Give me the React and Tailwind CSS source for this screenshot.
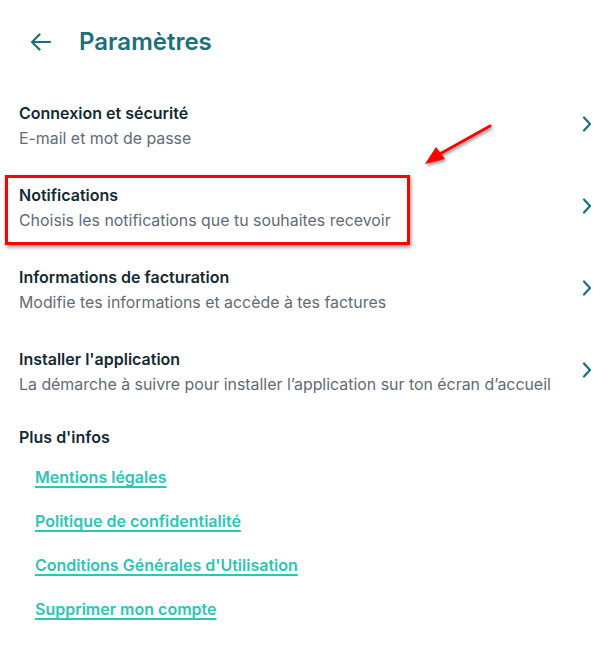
import React from "react"

const rows = [
  { title: "Connexion et sécurité", sub: "E-mail et mot de passe" },
  { title: "Notifications", sub: "Choisis les notifications que tu souhaites recevoir" },
  { title: "Informations de facturation", sub: "Modifie tes informations et accède à tes factures" },
  { title: "Installer l'application", sub: "La démarche à suivre pour installer l’application sur ton écran d’accueil" },
]

const links = [
  "Mentions légales",
  "Politique de confidentialité",
  "Conditions Générales d'Utilisation",
  "Supprimer mon compte",
]

function Chevron() {
  return (
    <svg width="10" height="16" viewBox="0 0 10 16" fill="none">
      <path d="M2 1.5 L8 8 L2 14.5" stroke="#1c6f7d" strokeWidth="2.2" strokeLinecap="round" strokeLinejoin="round" />
    </svg>
  )
}

export default function App() {
  return (
    <div className="relative min-h-[650px] w-[610px] bg-white font-['Inter','Noto_Sans',sans-serif] text-[#132a33]">
      {/* Header */}
      <div className="flex h-[85px] items-center pl-[30px]">
        <svg className="-mt-[2px]" width="21" height="18" viewBox="0 0 21 18" fill="none">
          <path d="M20 9 H2 M9.5 1.5 L2 9 L9.5 16.5" stroke="#1c6f7d" strokeWidth="2.2" strokeLinecap="round" strokeLinejoin="round" />
        </svg>
        <h1 className="-mt-[2px] ml-[28px] text-[24px] font-semibold leading-none text-[#1c6f7d]">Paramètres</h1>
      </div>

      {/* Settings rows */}
      <div className="flex flex-col">
        {rows.map((r) => (
          <div key={r.title} className="flex h-[82px] items-center justify-between pl-[19px] pr-[18px]">
            <div className="flex flex-col">
              <span className="text-[16px] font-semibold leading-[25px] text-[#132a33]">{r.title}</span>
              <span className="text-[15.9px] leading-[25px] text-[#5f6b78]">{r.sub}</span>
            </div>
            <div className="mt-[-4px]">
              <Chevron />
            </div>
          </div>
        ))}
      </div>

      {/* Plus d'infos */}
      <div className="mt-[12px] pl-[19px]">
        <div className="text-[16px] font-semibold leading-[25px] text-[#132a33]">Plus d'infos</div>
        <div className="mt-[15px] flex flex-col gap-[20px] pl-[16px]">
          {links.map((l) => (
            <a
              key={l}
              href="#"
              className="text-[16px] font-semibold leading-[24px] text-[#2ec4b6] underline decoration-[1.5px] underline-offset-[3px]"
            >
              {l}
            </a>
          ))}
        </div>
      </div>

      {/* Annotation: red highlight box */}
      <div className="pointer-events-none absolute left-[5px] top-[175px] h-[70px] w-[405px] border-[3px] border-[#ff0000] shadow-[1px_2px_4px_rgba(0,0,0,0.45)]" />

      {/* Annotation: red arrow */}
      <svg className="pointer-events-none absolute left-[418px] top-[118px]" width="80" height="56" viewBox="0 0 80 56" fill="none">
        <defs>
          <filter id="sh" x="-20%" y="-20%" width="150%" height="150%">
            <feDropShadow dx="1" dy="2" stdDeviation="1.5" floodColor="#000" floodOpacity="0.45" />
          </filter>
        </defs>
        <g filter="url(#sh)">
          <path d="M72 8 L20 37" stroke="#ff0000" strokeWidth="3" strokeLinecap="round" />
          <path d="M7 46 L18 29 L27 41 Z" fill="#ff0000" />
        </g>
      </svg>
    </div>
  )
}
